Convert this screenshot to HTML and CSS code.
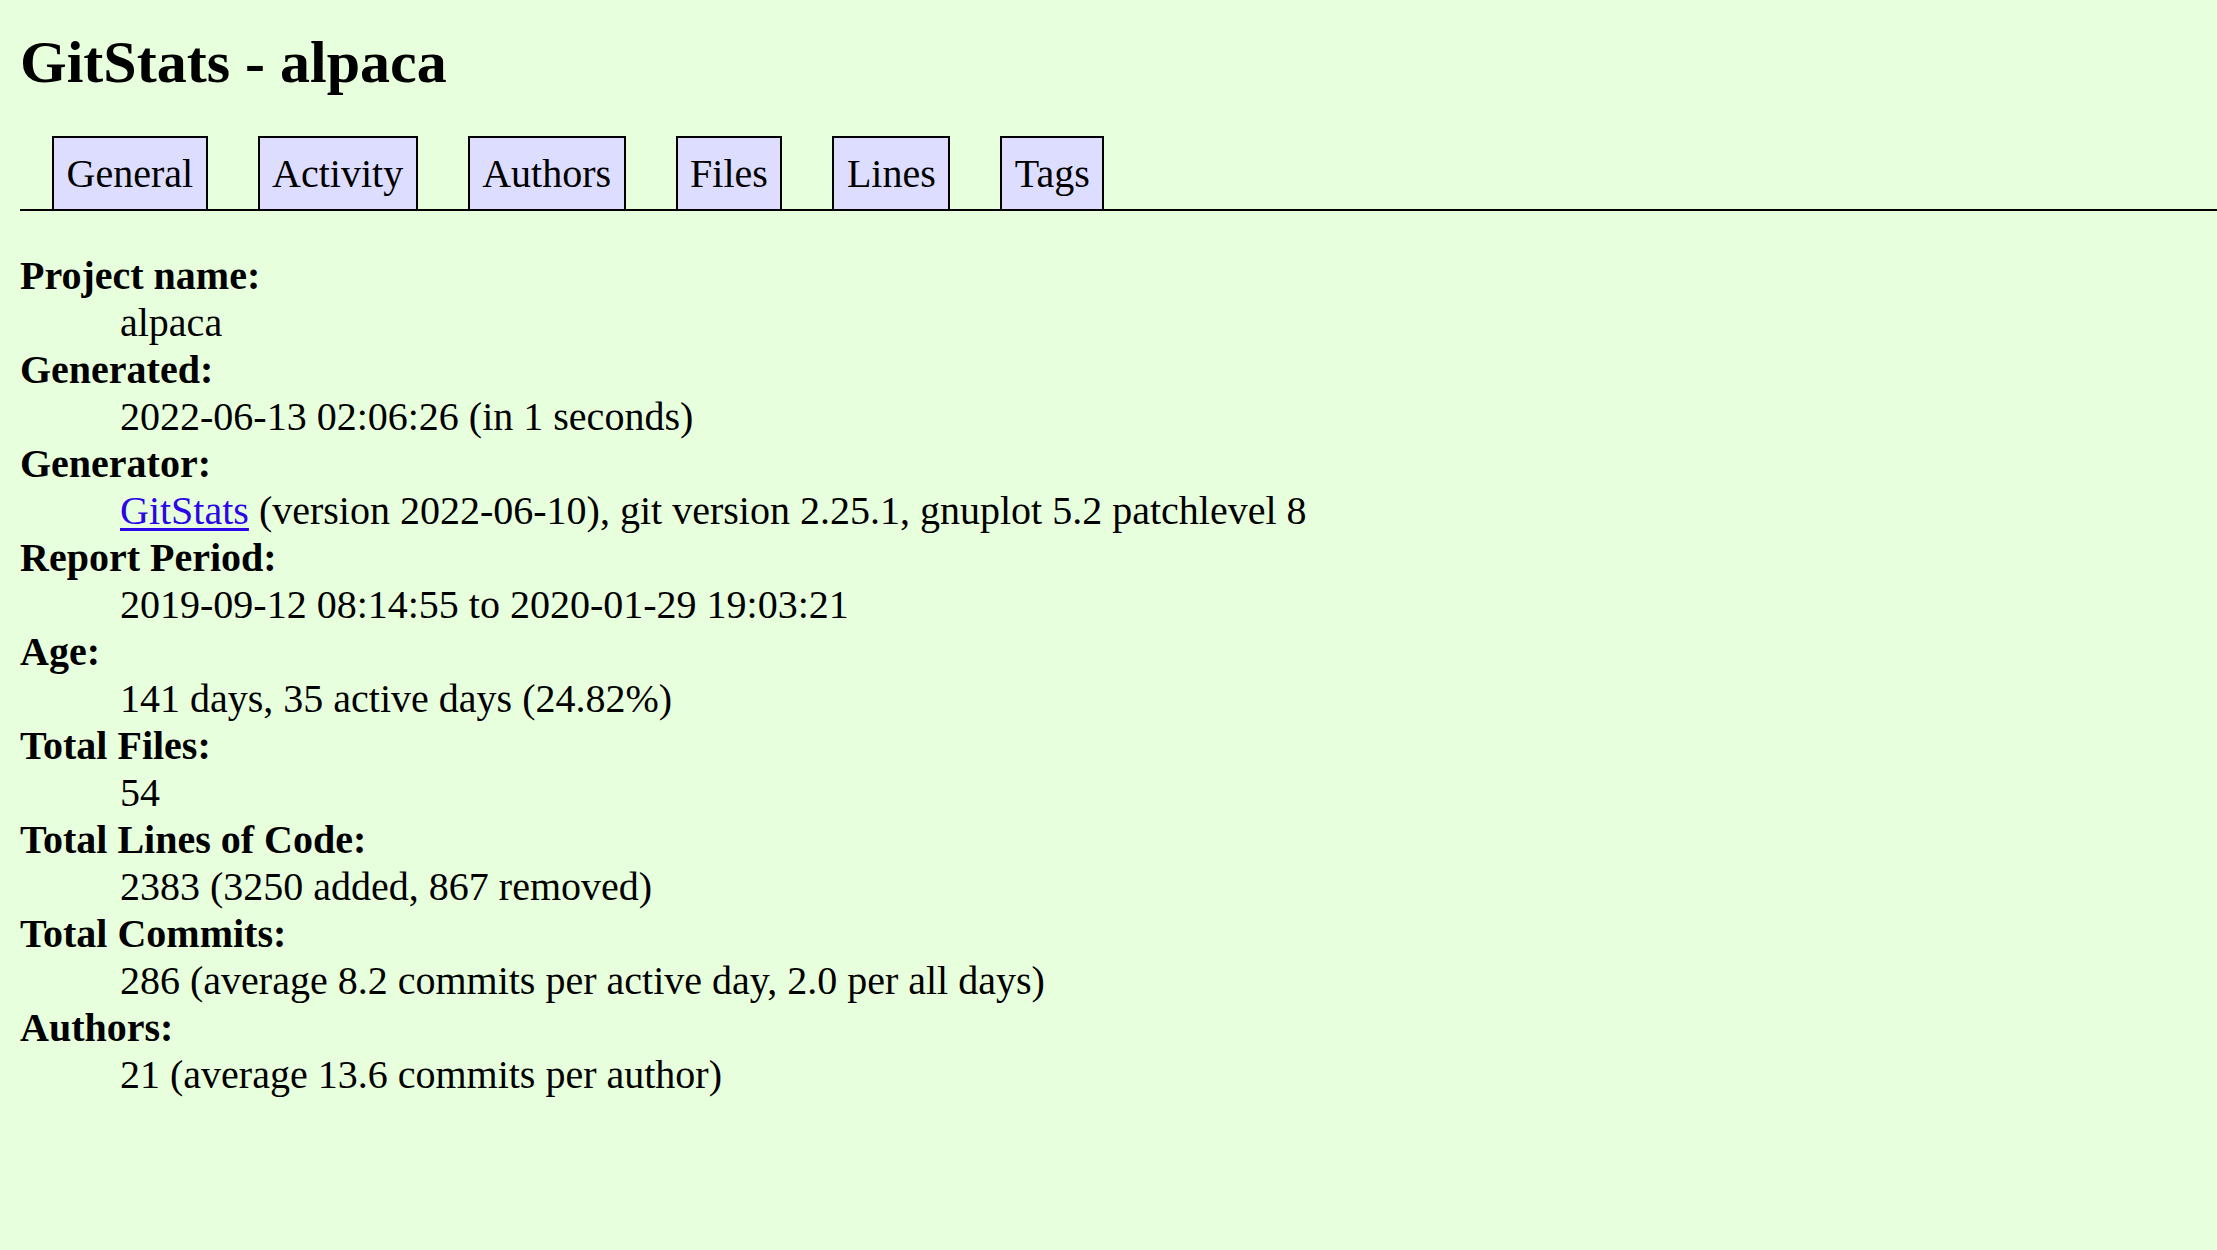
FILE: index.html
```html
<!DOCTYPE html>
<html>
<head>
<meta charset="utf-8">
<title>GitStats - alpaca</title>
<link rel="stylesheet" href="styles.css">
</head>
<body>
<h1 class="title">GitStats - alpaca</h1>
<div class="nav">
  <ul class="tabs">
    <li class="tab">General</li>
    <li class="tab">Activity</li>
    <li class="tab">Authors</li>
    <li class="tab">Files</li>
    <li class="tab">Lines</li>
    <li class="tab">Tags</li>
  </ul>
</div>
<dl class="info">
  <dt>Project name:</dt><dd>alpaca</dd>
  <dt>Generated:</dt><dd>2022-06-13 02:06:26 (in 1 seconds)</dd>
  <dt>Generator:</dt><dd><a class="link" href="#">GitStats</a> (version 2022-06-10), git version 2.25.1, gnuplot 5.2 patchlevel 8</dd>
  <dt>Report Period:</dt><dd>2019-09-12 08:14:55 to 2020-01-29 19:03:21</dd>
  <dt>Age:</dt><dd>141 days, 35 active days (24.82%)</dd>
  <dt>Total Files:</dt><dd>54</dd>
  <dt>Total Lines of Code:</dt><dd>2383 (3250 added, 867 removed)</dd>
  <dt>Total Commits:</dt><dd>286 (average 8.2 commits per active day, 2.0 per all days)</dd>
  <dt>Authors:</dt><dd>21 (average 13.6 commits per author)</dd>
</dl>
</body>
</html>
```

FILE: styles.css
```css
html, body {
  background-color: #e7ffdc;
}
body {
  margin: 0;
  padding: 0 0 0 20px;
  color: #000;
  font-family: "Liberation Serif", "Times New Roman", serif;
  font-size: 40px;
  line-height: 47px;
}
.title {
  font-size: 60px;
  line-height: 69px;
  font-weight: bold;
  margin: 28px 0 0 0;
}
.nav {
  margin-top: 39px;
  border-bottom: 2px solid #000;
}
.tabs {
  list-style: none;
  margin: 0;
  padding: 0 0 0 32px;
  display: flex;
  gap: 50px;
  align-items: flex-end;
}
.tab {
  background-color: #ddddff;
  border: 2px solid #000;
  border-bottom: 0;
  padding: 13px 12.5px 12px;
  line-height: 46px;
}
.info {
  margin: 41px 0 0 0;
}
.info dt {
  font-weight: bold;
}
.info dd {
  margin: 0 0 0 100px;
}
.link {
  color: #2b06e8;
  text-decoration: underline;
  text-decoration-thickness: 3px;
  text-underline-offset: 4px;
}
```
